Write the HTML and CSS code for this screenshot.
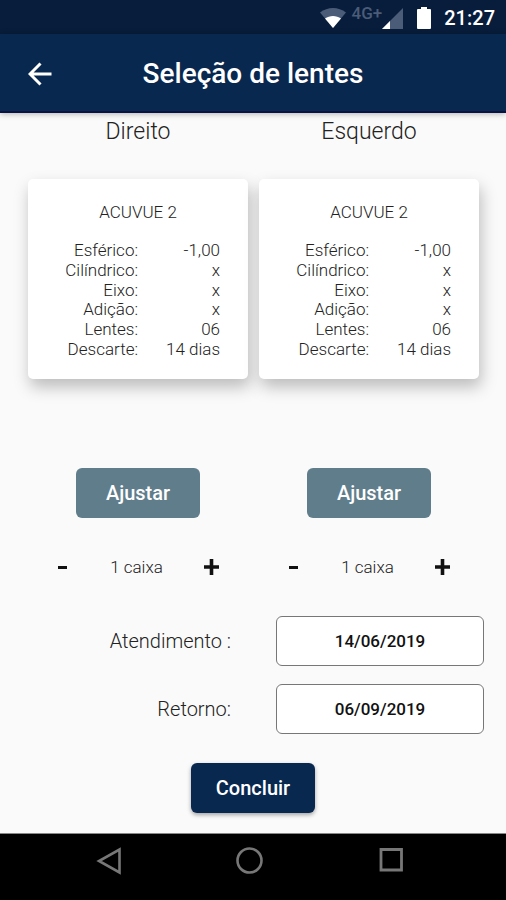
FILE: index.html
```html
<!DOCTYPE html>
<html lang="pt-BR">
<head>
<meta charset="utf-8">
<meta name="viewport" content="width=device-width, initial-scale=1">
<title>Seleção de lentes</title>
<link rel="stylesheet" href="styles.css">
</head>
<body>
<div class="status-bar">
  <svg class="wifi" width="26" height="20" viewBox="0 0 26 20" aria-hidden="true">
    <path d="M0 4.500C7.500-1.500 18.500-1.500 26 4.500L13 20z" fill="#4a5c78"/>
    <path d="M5 10.500C9.500 7 16.500 7 21 10.500L13 20z" fill="#fff"/>
  </svg>
  <span class="network">4G+</span>
  <svg class="signal" width="21" height="21" viewBox="0 0 21 21" aria-hidden="true">
    <path d="M21 0V21H0z" fill="#4a5c78"/>
    <path d="M8 13V21H0z" fill="#fff"/>
  </svg>
  <svg class="battery" width="14" height="22" viewBox="0 0 14 22" aria-hidden="true">
    <path d="M4 0h6v2h3a1 1 0 0 1 1 1v18a1 1 0 0 1-1 1H1a1 1 0 0 1-1-1V3a1 1 0 0 1 1-1h3z" fill="#fff"/>
  </svg>
  <time class="clock">21:27</time>
</div>
<header class="app-bar">
  <button class="back" type="button" aria-label="Voltar">
    <svg width="24" height="24" viewBox="0 0 24 24" aria-hidden="true"><path d="M23.500 12H2M12.500 1.500L2 12l10.500 10.500" fill="none" stroke="#fff" stroke-width="3"/></svg>
  </button>
  <h1>Seleção de lentes</h1>
</header>
<main>
  <div class="eyes">
    <section class="eye">
      <h2>Direito</h2>
      <div class="card">
        <h3>ACUVUE 2</h3>
        <table>
          <tr><th scope="row">Esférico:</th><td>-1,00</td></tr>
          <tr><th scope="row">Cilíndrico:</th><td>x</td></tr>
          <tr><th scope="row">Eixo:</th><td>x</td></tr>
          <tr><th scope="row">Adição:</th><td>x</td></tr>
          <tr><th scope="row">Lentes:</th><td>06</td></tr>
          <tr><th scope="row">Descarte:</th><td>14 dias</td></tr>
        </table>
      </div>
      <button class="button adjust" type="button">Ajustar</button>
      <div class="stepper">
        <button type="button" aria-label="Diminuir"><svg width="22" height="22" viewBox="0 0 22 22" aria-hidden="true"><path d="M7 11.500h9" stroke="#111" stroke-width="3"/></svg></button>
        <span>1 caixa</span>
        <button type="button" aria-label="Aumentar"><svg width="22" height="22" viewBox="0 0 22 22" aria-hidden="true"><path d="M4 11h15M11.500 3v16" stroke="#111" stroke-width="3.600"/></svg></button>
      </div>
    </section>
    <section class="eye">
      <h2>Esquerdo</h2>
      <div class="card">
        <h3>ACUVUE 2</h3>
        <table>
          <tr><th scope="row">Esférico:</th><td>-1,00</td></tr>
          <tr><th scope="row">Cilíndrico:</th><td>x</td></tr>
          <tr><th scope="row">Eixo:</th><td>x</td></tr>
          <tr><th scope="row">Adição:</th><td>x</td></tr>
          <tr><th scope="row">Lentes:</th><td>06</td></tr>
          <tr><th scope="row">Descarte:</th><td>14 dias</td></tr>
        </table>
      </div>
      <button class="button adjust" type="button">Ajustar</button>
      <div class="stepper">
        <button type="button" aria-label="Diminuir"><svg width="22" height="22" viewBox="0 0 22 22" aria-hidden="true"><path d="M7 11.500h9" stroke="#111" stroke-width="3"/></svg></button>
        <span>1 caixa</span>
        <button type="button" aria-label="Aumentar"><svg width="22" height="22" viewBox="0 0 22 22" aria-hidden="true"><path d="M4 11h15M11.500 3v16" stroke="#111" stroke-width="3.600"/></svg></button>
      </div>
    </section>
  </div>
  <form class="dates">
    <label for="visit">Atendimento :</label>
    <input id="visit" type="text" value="14/06/2019">
    <label for="return">Retorno:</label>
    <input id="return" type="text" value="06/09/2019">
    <button class="button finish" type="submit">Concluir</button>
  </form>
</main>
<nav class="system-nav" aria-label="Sistema">
  <button type="button" aria-label="Voltar ao anterior"><svg width="28" height="28" viewBox="0 0 28 28" aria-hidden="true"><path d="M24.500 2.500v23L4 14z" fill="none" stroke="#777" stroke-width="2.600"/></svg></button>
  <button type="button" aria-label="Início"><svg width="28" height="28" viewBox="0 0 28 28" aria-hidden="true"><circle cx="13.500" cy="13.500" r="12" fill="none" stroke="#777" stroke-width="2.600"/></svg></button>
  <button type="button" aria-label="Recentes"><svg width="28" height="28" viewBox="0 0 28 28" aria-hidden="true"><path d="M4 2.500h20.500v20.500h-20.500z" fill="none" stroke="#777" stroke-width="2.800"/></svg></button>
</nav>
</body>
</html>
```
FILE: styles.css
```css
* {
  box-sizing: border-box;
}

body {
  margin: 0;
  min-height: 100vh;
  display: flex;
  flex-direction: column;
  background: #fafafa;
  color: #222;
  font-family: Roboto, "Liberation Sans", sans-serif;
}

button {
  padding: 0;
  border: 0;
  background: none;
  font-family: inherit;
  cursor: pointer;
}

svg {
  display: block;
}

h1, h2, h3 {
  margin: 0;
}

.status-bar {
  display: flex;
  justify-content: flex-end;
  align-items: center;
  height: 34px;
  padding: 2px 11px 0 0;
  background: #081d3b;
  color: #fff;
}

.network {
  align-self: flex-start;
  margin-left: 6px;
  padding-top: 2px;
  color: #4a5c78;
  font-size: 17px;
  font-weight: 500;
  line-height: 18px;
}

.battery {
  margin: 0 13px 0 14px;
}

.clock {
  font-size: 20px;
  font-weight: 500;
  line-height: 32px;
}

.app-bar {
  position: relative;
  z-index: 1;
  display: grid;
  grid-template-columns: 80px 1fr 80px;
  align-items: center;
  height: 79px;
  padding-top: 2px;
  background: #092850;
  border-bottom: 2px solid #081344;
  box-shadow: 0 1px 6px rgba(0, 0, 0, 0.3);
  color: #fff;
}

.back {
  justify-self: center;
}

.app-bar h1 {
  font-size: 28px;
  font-weight: 500;
  line-height: 32px;
  text-align: center;
}

main {
  flex: 1;
  padding-bottom: 20px;
}

.eyes {
  display: grid;
  grid-template-columns: 1fr 1fr;
  gap: 11px;
  padding: 6px 27px 0 28px;
}

.eye {
  display: flex;
  flex-direction: column;
  align-items: center;
}

.eye h2 {
  font-size: 23px;
  font-weight: 300;
  line-height: 26px;
}

.card {
  align-self: stretch;
  margin: 34px 0 89px;
  padding: 23px 28px 20px;
  border-radius: 5px;
  background: #fff;
  box-shadow: 2px 8px 16px rgba(0, 0, 0, 0.25);
}

.card h3 {
  font-size: 17px;
  font-weight: 300;
  line-height: 20px;
  text-align: center;
}

.card table {
  width: 100%;
  height: 118px;
  margin-top: 19px;
  border-collapse: collapse;
  font-size: 17px;
  line-height: 19px;
}

.card th,
.card td {
  padding: 0;
  font-weight: 300;
  text-align: right;
}

.card th {
  width: 50%;
}

.button {
  width: 124px;
  height: 50px;
  border-radius: 6px;
  color: #fff;
  font-size: 20px;
  font-weight: 500;
}

.adjust {
  background: #607d8b;
}

.stepper {
  display: flex;
  justify-content: space-between;
  align-items: center;
  width: 100%;
  margin-top: 38px;
  padding: 0 26px 0 23px;
  font-size: 17px;
  font-weight: 300;
  line-height: 22px;
}

.dates {
  display: grid;
  grid-template-columns: 231px 1fr;
  column-gap: 45px;
  row-gap: 18px;
  align-items: center;
  padding: 38px 22px 0 0;
}

.dates label {
  font-size: 20px;
  font-weight: 300;
  text-align: right;
}

.dates input {
  width: 100%;
  height: 50px;
  border: 1px solid #777;
  border-radius: 6px;
  background: #fff;
  color: #111;
  font-family: inherit;
  font-size: 17px;
  font-weight: 500;
  text-align: center;
}

.finish {
  grid-column: 1 / -1;
  justify-self: center;
  margin: 11px 0 0 22px;
  background: #092850;
  box-shadow: 0 2px 4px rgba(0, 0, 0, 0.35);
}

.system-nav {
  display: flex;
  justify-content: space-between;
  align-items: flex-start;
  height: 67px;
  padding: 13px 101px 0 95px;
  border-top: 1px solid #888;
  background: #000;
}
```
